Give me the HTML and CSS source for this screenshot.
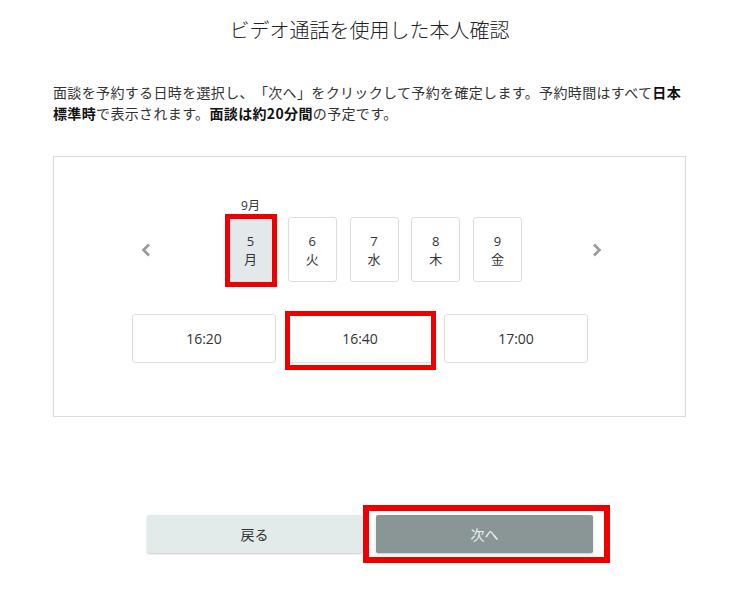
FILE: index.html
```html
<!DOCTYPE html>
<html lang="ja">
<head>
<meta charset="utf-8">
<title>ビデオ通話を使用した本人確認</title>
<link rel="stylesheet" href="styles.css">
</head>
<body>
<div class="page">
  <h1 class="title">ビデオ通話を使用した本人確認</h1>
  <p class="lead">面談を予約する日時を選択し、「次へ」をクリックして予約を確定します。予約時間はすべて<b>日本標準時</b>で表示されます。<b>面談は約20分間</b>の予定です。</p>

  <div class="card">
    <div class="days-row">
      <div class="arrow arrow-prev" role="button" aria-label="前へ">
        <svg width="10" height="14" viewBox="0 0 10 14"><path d="M8 1.5 L2.5 7 L8 12.5" fill="none" stroke="#9a9a9a" stroke-width="2.6"/></svg>
      </div>
      <div class="days">
        <div class="day-col">
          <div class="month">9月</div>
          <div class="day selected"><span>5</span><span>月</span><i class="mark mark-day"></i></div>
        </div>
        <div class="day-col">
          <div class="month"></div>
          <div class="day"><span>6</span><span>火</span></div>
        </div>
        <div class="day-col">
          <div class="month"></div>
          <div class="day"><span>7</span><span>水</span></div>
        </div>
        <div class="day-col">
          <div class="month"></div>
          <div class="day"><span>8</span><span>木</span></div>
        </div>
        <div class="day-col">
          <div class="month"></div>
          <div class="day"><span>9</span><span>金</span></div>
        </div>
      </div>
      <div class="arrow arrow-next" role="button" aria-label="次へ">
        <svg width="10" height="14" viewBox="0 0 10 14"><path d="M2 1.5 L7.5 7 L2 12.5" fill="none" stroke="#9a9a9a" stroke-width="2.6"/></svg>
      </div>
    </div>

    <div class="slots">
      <div class="slot">16:20</div>
      <div class="slot">16:40<i class="mark mark-slot"></i></div>
      <div class="slot">17:00</div>
    </div>
  </div>

  <div class="actions">
    <div class="btn btn-back" role="button">戻る</div>
    <div class="btn btn-next" role="button">次へ<i class="mark mark-btn"></i></div>
  </div>
</div>
</body>
</html>
```

FILE: styles.css
```css
* { box-sizing: border-box; }
html, body { margin: 0; padding: 0; background: #fff; }
body {
  font-family: "Open Sans", "Noto Sans CJK JP", sans-serif;
  color: #333;
}
.page {
  width: 740px;
  min-height: 606px;
  padding: 0 54px 40px 53px;
}
.title {
  margin: 16px 0 0;
  font-family: "Noto Sans CJK JP", sans-serif;
  font-size: 20px;
  line-height: 28px;
  font-weight: 300;
  text-align: center;
  color: #222;
}
.lead {
  margin: 38px 0 0;
  font-family: "Noto Sans CJK JP", sans-serif;
  font-size: 14px;
  line-height: 21px;
  letter-spacing: 0.35px;
  text-spacing-trim: space-all;
  color: #333;
}
.lead b { font-weight: 700; color: #111; }

.card {
  margin-top: 32px;
  border: 1px solid #dcdcdc;
  padding: 41px 0 53px;
}
.days-row {
  display: flex;
  align-items: flex-end;
  padding-left: 87px;
}
.arrow {
  width: 10px;
  height: 14px;
  margin-bottom: 25px;
  display: flex;
}
.arrow-prev { margin-right: 75px; }
.arrow-next { margin-left: 70px; }
.days {
  display: flex;
  gap: 12.75px;
}
.day-col {
  display: flex;
  flex-direction: column;
  align-items: center;
}
.month {
  height: 16px;
  font-size: 12px;
  line-height: 16px;
  color: #333;
}
.day {
  position: relative;
  margin-top: 3px;
  width: 49px;
  height: 65px;
  border: 1px solid #dedede;
  border-radius: 3px;
  background: #fff;
  display: flex;
  flex-direction: column;
  align-items: center;
  justify-content: center;
  font-size: 13px;
  line-height: 18px;
  color: #333;
}
.day.selected { background: #e3e9ea; }

.slots {
  display: flex;
  gap: 12px;
  margin-top: 32px;
  padding-left: 78px;
}
.slot {
  position: relative;
  width: 144px;
  height: 49px;
  border: 1px solid #dedede;
  border-radius: 3px;
  display: flex;
  align-items: center;
  justify-content: center;
  font-size: 14px;
  color: #333;
}

.actions {
  display: flex;
  justify-content: center;
  gap: 14px;
  margin-top: 98px;
  padding-left: 1px;
}
.btn {
  position: relative;
  height: 38px;
  border-radius: 2px;
  display: flex;
  align-items: center;
  justify-content: center;
  font-family: "Noto Sans CJK JP", sans-serif;
  font-size: 14px;
  box-shadow: 0 1px 2px rgba(0,0,0,0.22);
}
.btn-back {
  width: 215px;
  background: #e3eaea;
  color: #333;
}
.btn-next {
  width: 217px;
  background: #8a9595;
  color: #eef2f2;
}

.mark {
  position: absolute;
  border: 5px solid #ee0000;
  pointer-events: none;
}
.mark-day { left: -2px; right: -3px; top: -4px; bottom: -6px; }
.mark-slot { left: -4px; right: -5px; top: -4px; bottom: -8px; }
.mark-btn { left: -13px; right: -17px; top: -10px; bottom: -10px; border-width: 6px; }
```
